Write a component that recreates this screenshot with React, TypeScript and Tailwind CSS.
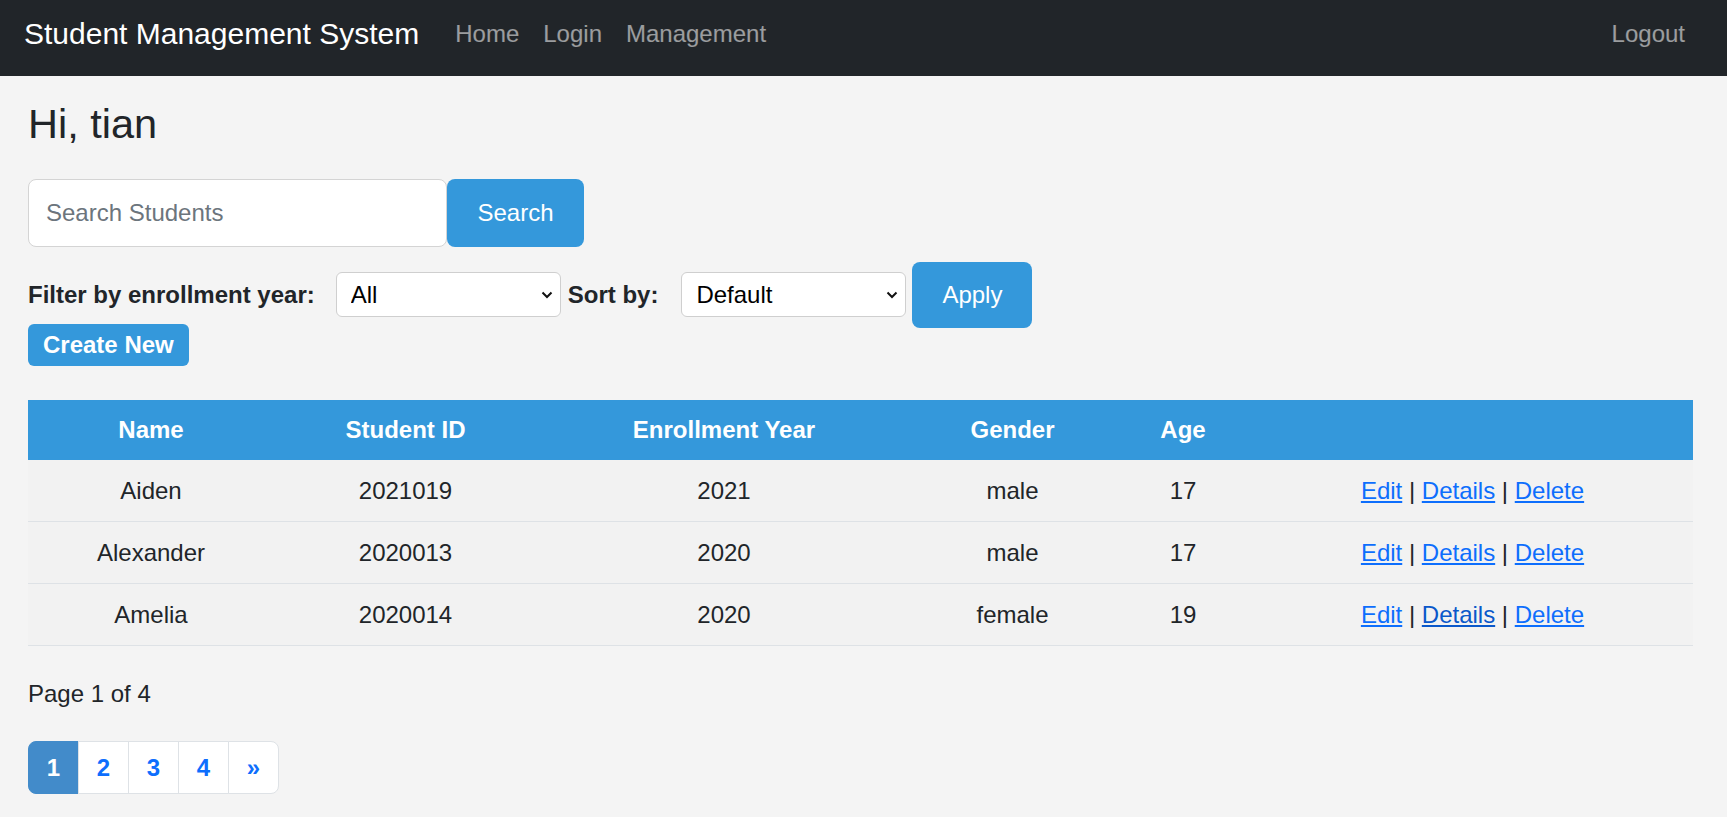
const students = [
  { name: 'Aiden', id: '2021019', year: '2021', gender: 'male', age: 17 },
  { name: 'Alexander', id: '2020013', year: '2020', gender: 'male', age: 17 },
  { name: 'Amelia', id: '2020014', year: '2020', gender: 'female', age: 19 },
]

const Chevron = () => (
  <svg
    className="pointer-events-none absolute right-[8px] top-1/2 -translate-y-1/2"
    width="12"
    height="8"
    viewBox="0 0 12 8"
    fill="none"
  >
    <path d="M1.5 1.5l4.5 4.5 4.5-4.5" stroke="#111" strokeWidth="2" />
  </svg>
)

const Select = ({ value, options }: { value: string; options: string[] }) => (
  <div className="relative w-[225px] h-[45px]">
    <select
      defaultValue={value}
      className="appearance-none w-full h-full bg-white border border-[#cfcfcf] rounded-[6px] pl-[14px] text-[24px] text-black outline-none"
    >
      {options.map((o) => (
        <option key={o}>{o}</option>
      ))}
    </select>
    <Chevron />
  </div>
)

export default function App() {
  return (
    <div className="min-h-screen bg-[#f4f4f4] font-['Liberation_Sans',Arial,sans-serif] text-[#212529]">
      {/* top bar */}
      <nav className="h-[76px] bg-[#212529] flex items-center pl-6 pr-[30px] pb-[8px]">
        <a href="#" className="text-[30px] leading-[45px] text-white mr-6 mb-[2px]">
          Student Management System
        </a>
        <a href="#" className="px-3 text-[24px] leading-9 text-white/55">Home</a>
        <a href="#" className="px-3 text-[24px] leading-9 text-white/55">Login</a>
        <a href="#" className="px-3 text-[24px] leading-9 text-white/55">Management</a>
        <a href="#" className="ml-auto px-3 text-[24px] leading-9 text-white/55">Logout</a>
      </nav>

      <main className="pl-[28px] pr-[34px] pb-10">
        <h3 className="text-[41.5px] leading-[1.2] mt-[23px] mb-[30px]">Hi, tian</h3>

        <form className="flex" onSubmit={(e) => e.preventDefault()}>
          <input
            type="text"
            placeholder="Search Students"
            className="w-[419px] h-[68px] bg-white border border-[#d4d4d4] rounded-[8px] px-[17px] text-[24px] placeholder:text-[#6c757d] outline-none"
          />
          <button className="w-[137px] h-[68px] bg-[#3498db] text-white text-[24px] rounded-[8px]">
            Search
          </button>
        </form>

        <div className="flex items-center mt-[15px]">
          <label className="font-bold text-[24px] mr-[21px]">Filter by enrollment year:</label>
          <div className="mr-[7px]">
            <Select value="All" options={['All', '2020', '2021', '2022', '2023']} />
          </div>
          <label className="font-bold text-[24px] mr-[23px]">Sort by:</label>
          <div className="mr-[6px]">
            <Select value="Default" options={['Default', 'Name', 'Age']} />
          </div>
          <button className="w-[120px] h-[66px] bg-[#3498db] text-white text-[24px] rounded-[8px]">
            Apply
          </button>
        </div>

        <a
          href="#"
          className="inline-block mt-[-4px] px-[15px] py-[7px] bg-[#3498db] text-white font-bold text-[24px] leading-[28px] rounded-[6px]"
        >
          Create New
        </a>

        <table className="table-fixed border-collapse w-full mt-[34px] text-[24px]">
          <colgroup>
            <col className="w-[246px]" />
            <col className="w-[263px]" />
            <col className="w-[374px]" />
            <col className="w-[203px]" />
            <col className="w-[138px]" />
            <col />
          </colgroup>
          <thead>
            <tr className="bg-[#3498db] text-white h-[60px]">
              <th className="font-bold">Name</th>
              <th className="font-bold">Student ID</th>
              <th className="font-bold">Enrollment Year</th>
              <th className="font-bold">Gender</th>
              <th className="font-bold">Age</th>
              <th></th>
            </tr>
          </thead>
          <tbody>
            {students.map((s, i) => (
              <tr key={s.id} className="bg-[#f2f2f2] border-b border-[#dee2e6] h-[62px] text-center">
                <td>{s.name}</td>
                <td>{s.id}</td>
                <td>{s.year}</td>
                <td>{s.gender}</td>
                <td>{s.age}</td>
                <td>
                  <a href="#" className="text-[#0d6efd] underline">Edit</a> |{' '}
                  <a href="#" className={i === 2 ? 'text-[#0a58ca] underline' : 'text-[#0d6efd] underline'}>
                    Details
                  </a>{' '}
                  | <a href="#" className="text-[#0d6efd] underline">Delete</a>
                </td>
              </tr>
            ))}
          </tbody>
        </table>

        <p className="text-[24px] leading-9 mt-[30px]">Page 1 of 4</p>

        <ul className="flex mt-[29px] text-[24px] font-bold">
          <li className="w-[51px] h-[53px] flex items-center justify-center bg-[#428bca] text-white border border-[#428bca] rounded-l-[8px]">
            1
          </li>
          {['2', '3', '4'].map((p) => (
            <li
              key={p}
              className="w-[51px] h-[53px] -ml-px flex items-center justify-center bg-white text-[#0d6efd] border border-[#dee2e6]"
            >
              {p}
            </li>
          ))}
          <li className="w-[51px] h-[53px] -ml-px flex items-center justify-center bg-white text-[#0d6efd] border border-[#dee2e6] rounded-r-[8px]">
            »
          </li>
        </ul>
      </main>
    </div>
  )
}
